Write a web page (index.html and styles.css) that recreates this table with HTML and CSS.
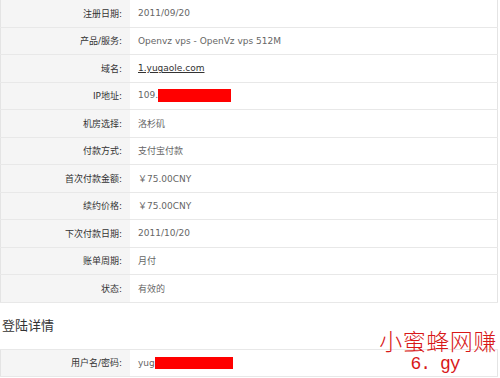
FILE: index.html
```html
<!DOCTYPE html>
<html lang="zh">
<head>
<meta charset="utf-8">
<link rel="stylesheet" href="styles.css">
</head>
<body>
<table class="info">
<tr><th>注册日期:</th><td>2011/09/20</td></tr>
<tr><th>产品/服务:</th><td>Openvz vps - OpenVz vps 512M</td></tr>
<tr><th>域名:</th><td><a class="link">1.yugaole.com</a></td></tr>
<tr><th>IP地址:</th><td>109.<span class="redact ip"></span></td></tr>
<tr><th>机房选择:</th><td>洛杉矶</td></tr>
<tr><th>付款方式:</th><td>支付宝付款</td></tr>
<tr><th>首次付款金额:</th><td>￥75.00CNY</td></tr>
<tr><th>续约价格:</th><td>￥75.00CNY</td></tr>
<tr><th>下次付款日期:</th><td>2011/10/20</td></tr>
<tr><th>账单周期:</th><td>月付</td></tr>
<tr><th>状态:</th><td>有效的</td></tr>
</table>
<h2 class="title">登陆详情</h2>
<table class="info second">
<tr><th>用户名/密码:</th><td>yug<span class="redact user"></span></td></tr>
</table>
<div class="mark">
<div class="mark-cn">小蜜蜂网赚</div>
<div class="mark-en">6. gy</div>
</div>
</body>
</html>
```
FILE: styles.css
```css
html, body {
  margin: 0;
  padding: 0;
  background: #fff;
  width: 500px;
  height: 378px;
  overflow: hidden;
  position: relative;
  font-family: "DejaVu Sans", "Noto Sans CJK SC", sans-serif;
}
.info {
  width: 498px;
  border-collapse: collapse;
  border-left: 1px solid #e4e4e4;
  border-right: 1px solid #e4e4e4;
  font-size: 9px;
}
.info th, .info td {
  height: 26.5px;
  padding: 0;
  border-bottom: 1px solid #e8e8e8;
  vertical-align: middle;
}
.info th {
  width: 121px;
  padding-right: 8px;
  text-align: right;
  font-weight: normal;
  color: #333;
  background: #f5f5f5;
}
.info td {
  padding-left: 8px;
  color: #666;
  background: #fff;
}
.link {
  color: #333;
  text-decoration: underline;
}
.redact {
  display: inline-block;
  background: #ff0000;
  vertical-align: middle;
}
.redact.ip {
  width: 73px;
  height: 13px;
}
.redact.user {
  width: 78px;
  height: 12px;
}
.title {
  margin: 13px 0 15px 2px;
  font-size: 13px;
  font-weight: normal;
  color: #333;
  font-family: "Noto Sans CJK SC", sans-serif;
  line-height: 18px;
}
.second th, .second td {
  border-top: 1px solid #e8e8e8;
}
.mark {
  position: absolute;
  left: 377px;
  top: 326px;
  color: #d81818;
  text-align: center;
  width: 122px;
}
.mark-cn {
  font-family: "Noto Sans CJK SC", serif;
  font-weight: 300;
  font-size: 23px;
  line-height: 28px;
  letter-spacing: 0.5px;
}
.mark-en {
  font-family: "Liberation Mono", monospace;
  font-size: 18px;
  line-height: 20px;
  margin-left: -6px;
  letter-spacing: -1px;
}
```
